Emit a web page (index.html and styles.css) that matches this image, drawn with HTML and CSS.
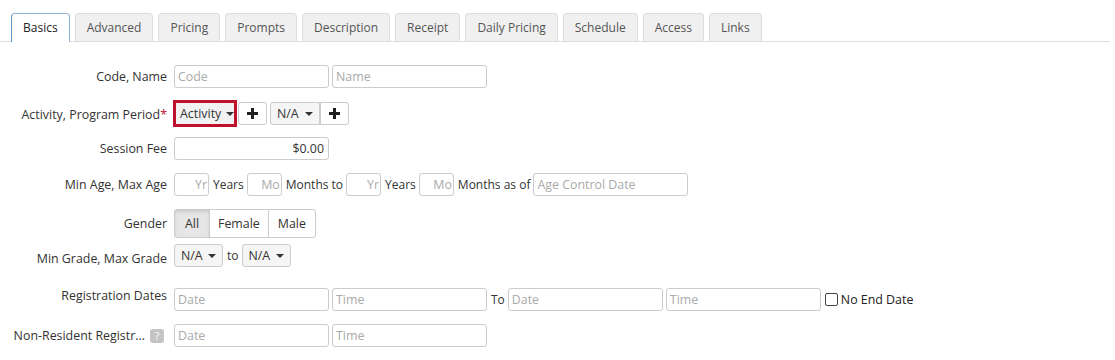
FILE: index.html
```html
<!DOCTYPE html>
<html lang="en">
<head>
    <meta charset="UTF-8">
    <title>Session - Basics</title>
    <link rel="stylesheet" href="styles.css">
</head>
<body>
    <ul class="tabs">
        <li class="tab active">Basics</li>
        <li class="tab">Advanced</li>
        <li class="tab">Pricing</li>
        <li class="tab">Prompts</li>
        <li class="tab">Description</li>
        <li class="tab">Receipt</li>
        <li class="tab">Daily Pricing</li>
        <li class="tab">Schedule</li>
        <li class="tab">Access</li>
        <li class="tab">Links</li>
    </ul>

    <div class="form">
        <div class="row">
            <label class="label">Code, Name</label>
            <div class="fields">
                <input class="input" type="text" placeholder="Code">
                <input class="input" type="text" placeholder="Name">
            </div>
        </div>

        <div class="row row-activity">
            <label class="label"><span>Activity, Program Period<span class="req">*</span></span></label>
            <div class="fields">
                <div class="select select-error">Activity <span class="caret"></span></div>
                <button class="add-btn">
                    <svg width="13" height="13" viewBox="0 0 13 13"><path d="M6.5 1v11M1 6.5h11" stroke="#1f1f1f" stroke-width="3"/></svg>
                </button>
                <div class="select select-period">N/A <span class="caret"></span></div>
                <button class="add-btn add-joined">
                    <svg width="13" height="13" viewBox="0 0 13 13"><path d="M6.5 1v11M1 6.5h11" stroke="#1f1f1f" stroke-width="3"/></svg>
                </button>
            </div>
        </div>

        <div class="row">
            <label class="label">Session Fee</label>
            <div class="fields">
                <input class="input input-money" type="text" value="$0.00">
            </div>
        </div>

        <div class="row">
            <label class="label">Min Age, Max Age</label>
            <div class="fields">
                <input class="input input-tiny" type="text" placeholder="Yr">
                <span class="txt">Years</span>
                <input class="input input-tiny" type="text" placeholder="Mo">
                <span class="txt">Months to</span>
                <input class="input input-tiny" type="text" placeholder="Yr">
                <span class="txt">Years</span>
                <input class="input input-tiny" type="text" placeholder="Mo">
                <span class="txt">Months as of</span>
                <input class="input" type="text" placeholder="Age Control Date">
            </div>
        </div>

        <div class="row row-gender">
            <label class="label">Gender</label>
            <div class="fields">
                <div class="btn-group">
                    <button class="seg active">All</button>
                    <button class="seg">Female</button>
                    <button class="seg">Male</button>
                </div>
            </div>
        </div>

        <div class="row row-grade">
            <label class="label">Min Grade, Max Grade</label>
            <div class="fields">
                <div class="select select-grade">N/A <span class="caret"></span></div>
                <span class="txt">to</span>
                <div class="select select-grade">N/A <span class="caret"></span></div>
            </div>
        </div>

        <div class="row">
            <label class="label label-high">Registration Dates</label>
            <div class="fields">
                <input class="input" type="text" placeholder="Date">
                <input class="input" type="text" placeholder="Time">
                <span class="txt">To</span>
                <input class="input" type="text" placeholder="Date">
                <input class="input" type="text" placeholder="Time">
                <label class="check"><span class="box"></span>No End Date</label>
            </div>
        </div>

        <div class="row">
            <label class="label">Non-Resident Registr... <span class="help">?</span></label>
            <div class="fields">
                <input class="input" type="text" placeholder="Date">
                <input class="input" type="text" placeholder="Time">
            </div>
        </div>
    </div>
</body>
</html>
```

FILE: styles.css
```css
body {
    margin: 0;
    font-family: 'Open Sans', 'Noto Sans', sans-serif;
    font-size: 12.4px;
    color: #333;
    background: #fff;
}

/* Tabs */
.tabs {
    list-style: none;
    margin: 13px 5px 0 0;
    padding: 0 0 0 11px;
    display: flex;
    gap: 5px;
    border-bottom: 1px solid #ddd;
}

.tab {
    height: 27px;
    line-height: 27px;
    padding: 0 11px;
    font-size: 12px;
    background: #f0f0f0;
    border: 1px solid #ddd;
    border-bottom: none;
    border-radius: 4px 4px 0 0;
    color: #555;
}

.tab.active {
    background: #fff;
    color: #222;
    border-color: #8fb3d6 #8fb3d6 #fff #5b8fc2;
    margin-bottom: -1px;
    height: 28px;
}

/* Form rows */
.form {
    padding-top: 23px;
}

.row {
    display: flex;
    align-items: flex-start;
    height: 36px;
}

.row-activity {
    height: 37px;
    margin-top: -1px;
}

.row-grade {
    height: 44px;
    margin-top: -1px;
}

.label {
    width: 167px;
    flex-shrink: 0;
    padding-right: 7px;
    color: #333;
    display: flex;
    justify-content: flex-end;
    align-items: center;
    height: 23px;
    gap: 5px;
    white-space: nowrap;
}

.row-activity .label,
.row-gender .label,
.row-grade .label {
    height: 29px;
}

.label-high {
    margin-top: -4px;
}

.req {
    color: #c0112c;
}

.fields {
    display: flex;
    align-items: center;
    gap: 3px;
}

.txt {
    color: #333;
    font-size: 12px;
    padding-left: 1px;
}

.input {
    width: 155px;
    height: 23px;
    box-sizing: border-box;
    border: 1px solid #ccc;
    border-radius: 3px;
    padding: 0 3px;
    font-family: inherit;
    font-size: 12.4px;
    color: #333;
}

.input::placeholder {
    color: #aaa;
}

.input-money {
    text-align: right;
    padding-right: 4px;
}

.input-tiny {
    width: 35px;
    text-align: right;
    padding-right: 1px;
}

/* Selects */
.select {
    height: 23px;
    box-sizing: border-box;
    border: 1px solid #ccc;
    border-radius: 3px;
    background: #f5f5f5;
    display: flex;
    align-items: center;
    padding: 0 6px;
    gap: 5px;
    color: #333;
}

.select-error {
    height: 27px;
    width: 64px;
    border: 3px solid #c0112c;
    border-radius: 0;
    padding: 0 3px 0 4px;
    margin-left: -1px;
    background: #f2f2f2;
}

.select-period {
    width: 50px;
    justify-content: space-between;
    border-radius: 3px 0 0 3px;
}

.select-grade {
    width: 49px;
    justify-content: space-between;
}

.caret {
    width: 0;
    height: 0;
    border-left: 4px solid transparent;
    border-right: 4px solid transparent;
    border-top: 4px solid #333;
}

.add-btn {
    width: 29px;
    height: 23px;
    border: 1px solid #ccc;
    border-radius: 3px;
    background: #fff;
    display: flex;
    align-items: center;
    justify-content: center;
    padding: 0;
    margin-left: -2px;
}

.add-joined {
    margin-left: -3px;
    border-radius: 0 3px 3px 0;
}

/* Gender buttons */
.btn-group {
    display: flex;
    height: 29px;
}

.seg {
    font-family: inherit;
    font-size: 12.4px;
    color: #333;
    background: #fff;
    border: 1px solid #ccc;
    padding: 0 8px;
    margin-left: -1px;
}

.seg:first-child {
    margin-left: 0;
    border-radius: 3px 0 0 3px;
    width: 36px;
    padding: 0;
}

.seg:last-child {
    border-radius: 0 3px 3px 0;
    padding: 0 9px;
}

.seg.active {
    background: #e6e6e6;
    box-shadow: inset 0 2px 3px rgba(0, 0, 0, 0.12);
}

/* Checkbox */
.check {
    display: flex;
    align-items: center;
    gap: 3px;
    color: #222;
    margin-left: 1px;
}

.box {
    width: 11px;
    height: 11px;
    border: 1px solid #444;
    border-radius: 2px;
    background: #fff;
}

.help {
    display: inline-block;
    width: 14px;
    height: 14px;
    line-height: 14px;
    text-align: center;
    font-size: 11px;
    background: #c4c4c4;
    color: #fff;
    border-radius: 3px;
    margin-right: 3px;
}
```
